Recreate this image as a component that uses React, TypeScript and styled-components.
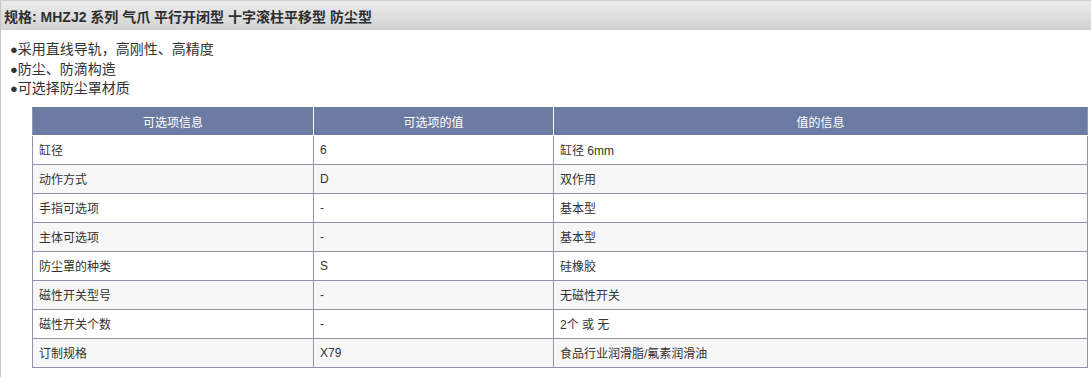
import styled, { createGlobalStyle } from 'styled-components'

const GlobalStyle = createGlobalStyle`
  html, body {
    margin: 0;
    padding: 0;
    background: #fff;
    font-family: "Liberation Sans", "Noto Sans CJK SC", sans-serif;
    color: #333;
  }
`

const Panel = styled.div`
  width: 1091px;
  height: 377px;
  box-sizing: border-box;
  border-left: 1px solid #c6c6c6;
  border-top: 1px solid #cfcfcf;
  overflow: hidden;
`

const Heading = styled.div`
  height: 29px;
  display: flex;
  align-items: center;
  padding-left: 3px;
  background: linear-gradient(to bottom, #ececec 0%, #d2d2d2 100%);
  font-size: 14px;
  font-weight: bold;
  color: #2e2e2e;
`

const Features = styled.ul`
  list-style: none;
  margin: 0;
  padding: 10px 0 0 9px;
  font-size: 14px;
  line-height: 18.5px;
  color: #333;
`

const Feature = styled.li`
  &::before {
    content: '●';
    font-size: 13px;
  }
`

const Table = styled.table`
  margin: 8px 0 0 31px;
  width: 1055px;
  border-collapse: collapse;
  table-layout: fixed;
  font-size: 12px;
  color: #333;
`

const HeadCell = styled.th`
  height: 27px;
  padding: 0;
  background: #6b7ba2;
  color: #fff;
  font-weight: normal;
  text-align: center;
  border: 1px solid #fff;
  border-top-color: #6b7ba2;
  &:first-child { border-left-color: #8f94a6; }
  &:last-child { border-right-color: #8f94a6; }
`

const Row = styled.tr<{ alt: boolean }>`
  background: ${p => (p.alt ? '#f7f7f7' : '#fff')};
`

const Cell = styled.td`
  height: 28px;
  padding: 0 0 0 6px;
  border: 1px solid #8f94a6;
`

const columns = [
  { title: '可选项信息', width: 281 },
  { title: '可选项的值', width: 240 },
  { title: '值的信息', width: 534 },
]

const rows = [
  ['缸径', '6', '缸径 6mm'],
  ['动作方式', 'D', '双作用'],
  ['手指可选项', '-', '基本型'],
  ['主体可选项', '-', '基本型'],
  ['防尘罩的种类', 'S', '硅橡胶'],
  ['磁性开关型号', '-', '无磁性开关'],
  ['磁性开关个数', '-', '2个 或 无'],
  ['订制规格', 'X79', '食品行业润滑脂/氟素润滑油'],
]

const features = ['采用直线导轨，高刚性、高精度', '防尘、防滴构造', '可选择防尘罩材质']

export default function App() {
  return (
    <>
      <GlobalStyle />
      <Panel>
        <Heading>规格: MHZJ2 系列 气爪 平行开闭型 十字滚柱平移型 防尘型</Heading>
        <Features>
          {features.map(f => (
            <Feature key={f}>{f}</Feature>
          ))}
        </Features>
        <Table>
          <colgroup>
            {columns.map(c => (
              <col key={c.title} style={{ width: c.width }} />
            ))}
          </colgroup>
          <thead>
            <tr>
              {columns.map(c => (
                <HeadCell key={c.title}>{c.title}</HeadCell>
              ))}
            </tr>
          </thead>
          <tbody>
            {rows.map((r, i) => (
              <Row key={r[0]} alt={i % 2 === 1}>
                {r.map((v, j) => (
                  <Cell key={j}>{v}</Cell>
                ))}
              </Row>
            ))}
          </tbody>
        </Table>
      </Panel>
    </>
  )
}
